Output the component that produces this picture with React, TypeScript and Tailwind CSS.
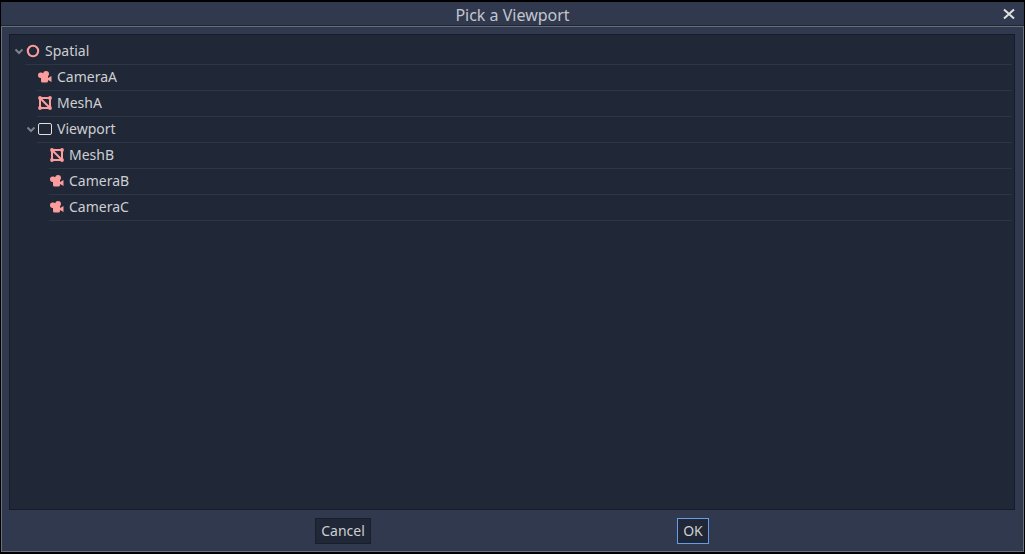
import React from "react";

type Kind = "spatial" | "camera" | "mesh" | "viewport";

interface TreeNode {
  name: string;
  kind: Kind;
  children?: TreeNode[];
}

const scene: TreeNode = {
  name: "Spatial",
  kind: "spatial",
  children: [
    { name: "CameraA", kind: "camera" },
    { name: "MeshA", kind: "mesh" },
    {
      name: "Viewport",
      kind: "viewport",
      children: [
        { name: "MeshB", kind: "mesh" },
        { name: "CameraB", kind: "camera" },
        { name: "CameraC", kind: "camera" },
      ],
    },
  ],
};

function NodeIcon({ kind }: { kind: Kind }) {
  return (
    <svg viewBox="0 0 16 16" className="size-4 shrink-0" aria-hidden="true">
      {kind === "spatial" && (
        <circle cx="8" cy="8" r="5.2" fill="none" stroke="#fc9c9c" strokeWidth="2.1" />
      )}
      {kind === "camera" && (
        <path
          fill="#fc9c9c"
          d="M9 2a3 3 0 0 0-2.900 2.200A2.700 2.700 0 0 0 4 3.500 2.800 2.800 0 0 0 1 6.300 2.800 2.800 0 0 0 4 9v3a1.500 1.500 0 0 0 1.500 1.500h4A1.500 1.500 0 0 0 11 12v-1l3.500 2V7L11 9V7.300A3 3 0 0 0 12 5a3 3 0 0 0-3-3Z"
        />
      )}
      {kind === "mesh" && (
        <g stroke="#fc9c9c" strokeWidth="2" fill="none">
          <path d="M3 3h10v10H3zM3 3l10 10" />
          <g fill="#fc9c9c" stroke="none">
            <circle cx="3" cy="3" r="1.9" />
            <circle cx="13" cy="3" r="1.9" />
            <circle cx="3" cy="13" r="1.9" />
            <circle cx="13" cy="13" r="1.9" />
          </g>
        </g>
      )}
      {kind === "viewport" && (
        <rect x="1.5" y="2.5" width="13" height="11" rx="1.5" fill="none" stroke="#e0e0e0" />
      )}
    </svg>
  );
}

function Branch({ node }: { node: TreeNode }) {
  const [open, setOpen] = React.useState(true);
  return (
    <li>
      <div className="flex h-[26px]">
        <div className="flex w-3 shrink-0 items-center justify-center pb-[2px]">
          {node.children && (
            <button
              type="button"
              aria-label={`Toggle ${node.name}`}
              aria-expanded={open}
              onClick={() => setOpen(!open)}
            >
              <svg viewBox="0 0 12 12" className="size-3" aria-hidden="true">
                <path d="M2.5 4.5 6 8l3.500-3.500" fill="none" stroke="#7d828c" strokeWidth="2" />
              </svg>
            </button>
          )}
        </div>
        <div className="flex flex-1 items-center gap-1 border-b border-[#2e3544] pb-px">
          <NodeIcon kind={node.kind} />
          <span>{node.name}</span>
        </div>
      </div>
      {node.children && open && (
        <ul className="pl-3">
          {node.children.map((child) => (
            <Branch key={child.name} node={child} />
          ))}
        </ul>
      )}
    </li>
  );
}

export default function App() {
  return (
    <div className="flex min-h-screen flex-col bg-black px-px py-[2px] font-['Noto_Sans',sans-serif] text-sm text-[#cdcfd2]">
      <section role="dialog" aria-labelledby="title" className="flex flex-1 flex-col bg-[#31394f]">
        <header className="grid h-6 grid-cols-[1fr_auto_1fr] items-center border-b border-[#1f2531] px-2">
          <h1 id="title" className="col-start-2 pt-px text-base leading-6 text-[#c3c6cc]">
            Pick a Viewport
          </h1>
          <button type="button" aria-label="Close" className="self-start justify-self-end pt-[5px]">
            <svg viewBox="0 0 14 14" className="size-3.5" aria-hidden="true">
              <path d="M2 2.500l10 9M12 2.500l-10 9" stroke="#e0e0e0" strokeWidth="2" />
            </svg>
          </button>
        </header>
        <div className="flex flex-1 flex-col border border-[#6a6f7d] pt-[7px] pr-2 pb-[7px] pl-[7px]">
          <ul className="flex-1 border border-[#161c29] bg-[#202736] py-1 pr-[2px] pl-[3px]">
            <Branch node={scene} />
          </ul>
          <div className="flex justify-evenly pt-2">
            <button type="button" className="h-[26px] border border-[#181e2b] bg-[#202736] px-[5px]">
              Cancel
            </button>
            <button type="button" className="h-[26px] border border-[#699ce8] bg-[#202736] px-[5px]">
              OK
            </button>
          </div>
        </div>
      </section>
    </div>
  );
}
